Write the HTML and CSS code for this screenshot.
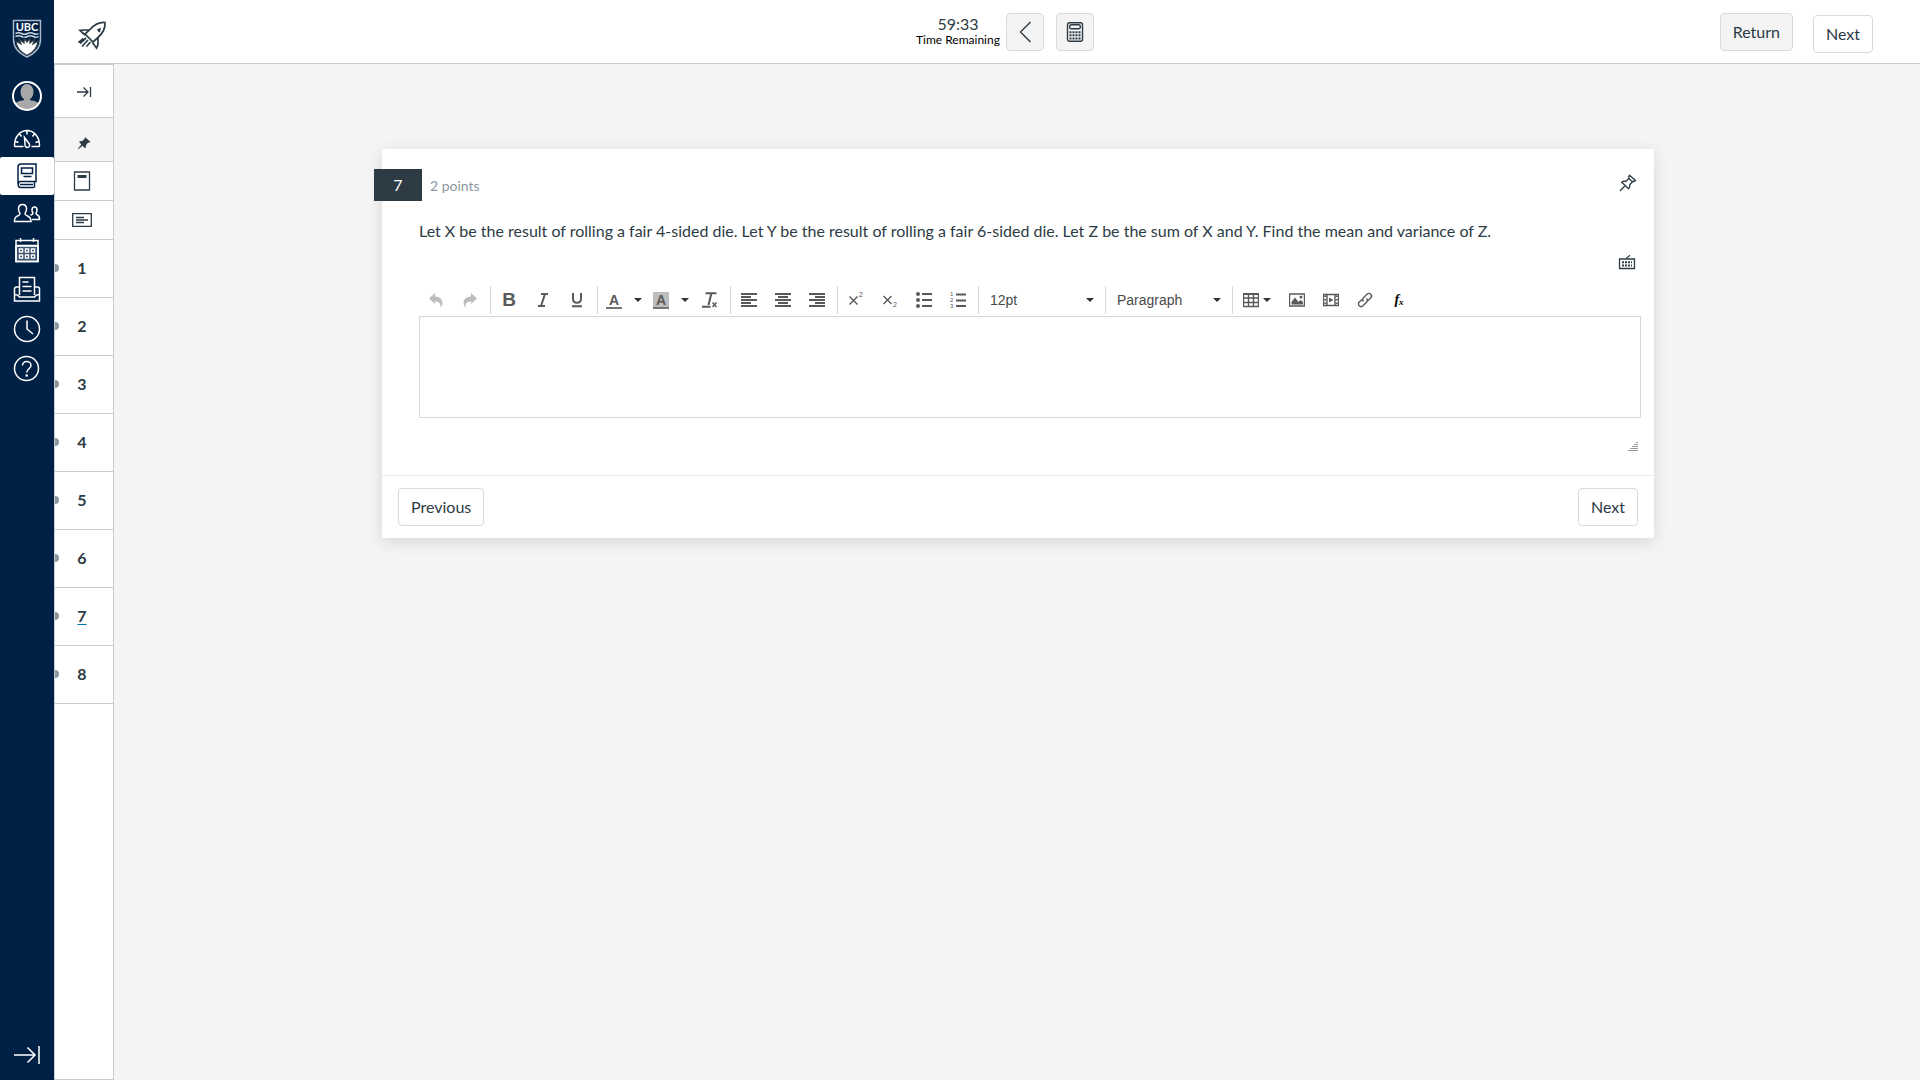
FILE: index.html
```
<!DOCTYPE html>
<html lang="en">
<head>
<meta charset="UTF-8">
<meta name="viewport" content="width=device-width, initial-scale=1.0">
<title>Quiz - Question 7</title>
<link rel="stylesheet" href="styles.css">
</head>
<body>
<nav class="global-nav" aria-label="Global navigation">
    <a class="logo" href="#" aria-label="UBC home">
        <svg width="30" height="40" viewBox="0 0 30 40">
            <path d="M1.500 1.500h27v19c0 8-6 14-13.500 17.500C7.500 34.500 1.500 28.500 1.500 20.500z" fill="#002145" stroke="#a9b7c9" stroke-width="1.500"/>
            <path d="M3.500 14.500q3-1.500 6 0t6 0 6 0 5 0M3.500 17.500q3-1.500 6 0t6 0 6 0 5 0" fill="none" stroke="#c9d3df" stroke-width="1.500"/>
            <path d="M4 22l5 3-2-5 5 4 0-5 3 4 3-4 0 5 5-4-2 5 5-3c-.5 7-5 11.500-11 14.500C9 33.500 4.500 29 4 22z" fill="#fff"/>
            <text x="15" y="11.500" text-anchor="middle" class="logo-text">UBC</text>
        </svg>
    </a>
    <a href="#" aria-label="Account">
        <svg width="30" height="30" viewBox="0 0 30 30">
            <clipPath id="face"><circle cx="15" cy="15" r="14"/></clipPath>
            <circle cx="15" cy="15" r="14" fill="#002145"/>
            <g clip-path="url(#face)" fill="#a8a8a8" stroke="none"><ellipse cx="15" cy="11" rx="6.500" ry="8"/><path d="M12 16h6v3c5 1 9 2 10 6v5H2v-5c1-4 5-5 10-6z"/></g>
            <circle cx="15" cy="15" r="14" fill="none" stroke="#fff" stroke-width="2"/>
        </svg>
    </a>
    <a href="#" aria-label="Dashboard">
        <svg class="line" width="28" height="28" viewBox="0 0 28 28">
            <path d="M10.500 23.500H2c-.5 0-.5-.5-.5-1C1.500 14 7 7.500 14 7.500S26.500 14 26.500 22.500c0 .5 0 1-.5 1h-7.500M14 8v3.500M6.500 11l2 2.500M21.500 11l-2 2.500M2.500 18.500l3 1M25.500 18.500l-3 1M11.500 14.500l4.500 6c1.500 2 0 4-1.500 4s-3-1.500-2.500-3.500z"/>
        </svg>
    </a>
    <a class="active" href="#" aria-label="Courses">
        <svg class="line" width="28" height="26" viewBox="0 0 28 26">
            <path d="M5 21V4c0-2 1-3 3-3h15v17.500H7.500c-3 0-3 6 0 6H21M8.500 5h11v5.500h-11zM10.500 13.500h8M21.500 19v5.500M7 21.500h13"/>
        </svg>
    </a>
    <a href="#" aria-label="Groups">
        <svg class="line" width="28" height="24" viewBox="0 0 28 24">
            <path d="M1.500 20.500c0-3.500.5-4.500 3-5.500 2-.8 2.500-1 2.500-2.500C6 11 5.500 9.500 5.500 8c0-3 1.500-4.500 4-4.500S13.500 5 13.500 8c0 1.500-.5 3-1.500 4.500 0 1.500.5 1.700 2.500 2.500 2.500 1 3.500 2 3.500 5.500zM19 18.500h7.500c0-2.500-.5-4-2-4.500-1.500-.6-1.500-.8-1.500-2 .7-.8 1-2 1-3 0-2-1-3-2.500-3S19 7 19 9c0 1 .3 2.200 1 3 0 1.200-.5 1.500-2.500 2.200"/>
        </svg>
    </a>
    <a href="#" aria-label="Calendar">
        <svg class="line" width="28" height="26" viewBox="0 0 28 26">
            <path fill="#3b546f" d="M3 9h22v15.500H3z"/>
            <path d="M3 3.500h22v21H3zM3 8.500h22M7.500 1v4M20.500 1v4"/>
            <path fill="#002145" d="M6.500 12h3v3h-3zM12.500 12h3v3h-3zM18.500 12h3v3h-3zM6.500 18h3v3h-3zM12.500 18h3v3h-3zM18.500 18h3v3h-3z"/>
        </svg>
    </a>
    <a href="#" aria-label="Inbox">
        <svg class="line" width="28" height="28" viewBox="0 0 28 28">
            <path d="M6.500 20V2.500h15V20M9.500 7h6M9.500 11.500h9M9.500 16h9M6.500 12h-3c-1.500 0-2 1-2 2v12h25V14c0-1-.5-2-2-2h-3M2 19.500c2 0 3 0 4.500 2.500h15c1.500-2.500 2.500-2.500 4.500-2.500"/>
        </svg>
    </a>
    <a href="#" aria-label="History">
        <svg class="line" width="28" height="28" viewBox="0 0 28 28">
            <circle cx="14" cy="14" r="12.500"/><path d="M14 5.500V14l6 5"/>
        </svg>
    </a>
    <a href="#" aria-label="Help">
        <svg class="line" width="28" height="28" viewBox="0 0 28 28">
            <circle cx="13.500" cy="13.500" r="12"/><path d="M9.500 10.500c0-2.500 2-4 4.200-4s4.300 1.500 4.300 4c0 3-4.300 3.500-4.300 7"/><circle cx="13.700" cy="20.500" r=".6"/>
        </svg>
    </a>
    <a class="expand" href="#" aria-label="Expand navigation">
        <svg class="line" width="28" height="20" viewBox="0 0 28 20">
            <path d="M1 10h21M14.500 2.500L22 10l-7.500 7.500M26 1v18"/>
        </svg>
    </a>
</nav>

<div class="app">
    <header class="top-bar">
        <svg class="rocket" width="30" height="30" viewBox="0 0 30 30">
            <path d="M13 9.500C17 5 22 2 28 2.500c.5 6-2.500 11-7 15l-5 4.500-8-8zM12.500 10H7.500L3 10.500l5 4.500M21 17.500v7L19.500 28l-4-5.500"/>
            <path d="M9 18l-6 5.500M11 20l-6 6.500M13.500 22l-4 4.500M6.500 18.500l-5 4"/>
            <path class="solid" d="M20 9.500l4-2-1 5-2-1z"/>
        </svg>
        <div class="tools">
            <div class="timer">
                <span class="time">59:33</span>
                <span class="time-label">Time Remaining</span>
            </div>
            <button class="btn gray icon-btn" aria-label="Hide time">
                <svg width="20" height="24" viewBox="0 0 20 24"><path d="M15.500 2l-10 10 10 10"/></svg>
            </button>
            <button class="btn gray icon-btn" aria-label="Calculator">
                <svg width="18" height="20" viewBox="0 0 18 20">
                    <rect x="1.500" y=".7" width="15" height="18.600" rx="2"/>
                    <rect x="3.700" y="2.700" width="10.600" height="4" rx="1.500"/>
                    <path class="keys" d="M3.500 10.200h11M3.500 13.200h11M3.500 16.500h11"/>
                </svg>
            </button>
        </div>
        <div class="actions">
            <button class="btn gray">Return</button>
            <button class="btn lower">Next</button>
        </div>
    </header>

    <div class="body">
        <aside class="question-nav">
            <button class="collapse" aria-label="Collapse question list">
                <svg width="16" height="12" viewBox="0 0 16 12"><path d="M1 6h11M7.500 1.500L12 6l-4.500 4.500M14.500 1v10"/></svg>
            </button>
            <button class="pinned" aria-label="Pinned questions">
                <svg width="14" height="14" viewBox="0 0 14 14"><path class="solid" d="M8 1l5.500 5-1.500.8-.8-.2-2.300 2.700c.3 1.200 0 2.200-.7 3L5.500 9.800 1.500 13H1v-.5l3.300-4L2 5.800c1-.7 2-1 3-.6l2.700-2.500z"/></svg>
            </button>
            <button class="tool" aria-label="Stimulus">
                <svg width="18" height="20" viewBox="0 0 18 20"><path d="M1.500 1h15v18h-15z"/><path class="solid" d="M4.500 4h9v3h-9z"/></svg>
            </button>
            <button class="tool" aria-label="Text block">
                <svg width="20" height="14" viewBox="0 0 20 14"><path d="M.7.700h18.600v12.600H.7zM4 4.500h8M4 7h12M4 9.500h8"/></svg>
            </button>
            <a href="#">1</a>
            <a href="#">2</a>
            <a href="#">3</a>
            <a href="#">4</a>
            <a href="#">5</a>
            <a href="#">6</a>
            <a class="current" href="#">7</a>
            <a href="#">8</a>
        </aside>

        <main>
            <section class="card">
                <div class="card-head">
                    <span class="number">7</span>
                    <span class="points">2 points</span>
                    <button class="plain pin" aria-label="Pin question">
                        <svg width="18" height="18" viewBox="0 0 18 18"><path d="M10.500 1.200l6 5.300-1.500 1-1-.2-3.300 3.500c.4 1.700 0 3-1 4L2.700 8.300c1.200-1 2.500-1.300 4-.8L10 4.300l-.3-1.500zM6 11.700L1 17M9.800 4.500l4.200 3.800"/></svg>
                    </button>
                </div>
                <div class="question">
                    <p>Let X be the result of rolling a fair 4-sided die. Let Y be the result of rolling a fair 6-sided die. Let Z be the sum of X and Y. Find the mean and variance of Z.</p>
                    <button class="plain keyboard" aria-label="Keyboard shortcuts">
                        <svg width="18" height="16" viewBox="0 0 18 16"><path d="M1.500 5h15v9.500h-15zM8.500 4.500c0-1.500 3-1 3-3.500"/><path class="keys" d="M4 8.200h10M4 11.500h10"/></svg>
                    </button>
                    <div class="toolbar">
                        <div class="group">
                            <button class="off" aria-label="Undo"><svg width="16" height="16" viewBox="0 0 16 16"><path class="solid" d="M1 6.500L7 1v3.500c5 0 7.500 3 7.500 6.500 0 2-.7 3.300-2 4.500.5-4-1.500-6-5.500-6V12z"/></svg></button>
                            <button class="off" aria-label="Redo"><svg width="16" height="16" viewBox="0 0 16 16"><path class="solid" d="M15 6.500L9 1v3.500c-5 0-7.500 3-7.500 6.500 0 2 .7 3.300 2 4.500-.5-4 1.500-6 5.500-6V12z"/></svg></button>
                        </div>
                        <div class="group">
                            <button class="bold" aria-label="Bold">B</button>
                            <button aria-label="Italic"><svg width="16" height="16" viewBox="0 0 16 16"><path d="M6 2h7M3 14h7M10 2L6 14"/></svg></button>
                            <button aria-label="Underline"><svg width="16" height="16" viewBox="0 0 16 16"><path d="M4 1v6c0 5 8 5 8 0V1M3 14.200h10"/></svg></button>
                        </div>
                        <div class="group">
                            <button class="color" aria-label="Text color"><span class="swatch">A</span></button>
                            <button class="arrow" aria-label="Text color options"><span class="caret"></span></button>
                            <button class="color" aria-label="Background color"><span class="swatch filled">A</span></button>
                            <button class="arrow" aria-label="Background color options"><span class="caret"></span></button>
                            <button aria-label="Clear formatting"><svg width="16" height="16" viewBox="0 0 16 16"><path d="M3.500 1.200h11M9.500 1L6.500 13M0 14.800h8.500"/><path class="thin" d="M10.500 10.500l4 4.500M14.500 10.500l-4 4.500"/></svg></button>
                        </div>
                        <div class="group">
                            <button aria-label="Align left"><svg width="16" height="16" viewBox="0 0 16 16"><path d="M0 2h16M0 5h10M0 8h16M0 11h10M0 14h16"/></svg></button>
                            <button aria-label="Align center"><svg width="16" height="16" viewBox="0 0 16 16"><path d="M0 2h16M3 5h10M0 8h16M3 11h10M0 14h16"/></svg></button>
                            <button aria-label="Align right"><svg width="16" height="16" viewBox="0 0 16 16"><path d="M0 2h16M6 5h10M0 8h16M6 11h10M0 14h16"/></svg></button>
                        </div>
                        <div class="group">
                            <button aria-label="Superscript"><svg width="16" height="16" viewBox="0 0 16 16"><path class="thin" d="M1.500 4.500l8 8M9.500 4.500l-8 8"/><text x="11" y="5">2</text></svg></button>
                            <button aria-label="Subscript"><svg width="16" height="16" viewBox="0 0 16 16"><path class="thin" d="M1.500 4l8 8M9.500 4l-8 8"/><text x="11" y="15">2</text></svg></button>
                            <button aria-label="Bulleted list"><svg width="16" height="16" viewBox="0 0 16 16"><path d="M6 2h10M6 8h10M6 14h10"/><g class="solid"><circle cx="2" cy="2" r="2"/><circle cx="2" cy="8" r="2"/><circle cx="2" cy="14" r="2"/></g></svg></button>
                            <button class="numbers" aria-label="Numbered list"><svg width="16" height="20" viewBox="0 0 16 20"><path d="M6 4.500h10M6 10.500h10M6 16h10"/><text x="0" y="6">1</text><text x="0" y="12">2</text><text x="0" y="18">3</text></svg></button>
                        </div>
                        <div class="group">
                            <label class="picker"><select aria-label="Font size"><option>12pt</option></select><span class="caret"></span></label>
                        </div>
                        <div class="group">
                            <label class="picker"><select aria-label="Block format"><option>Paragraph</option></select><span class="caret"></span></label>
                        </div>
                        <div class="group">
                            <button class="table-btn" aria-label="Table"><svg width="16" height="16" viewBox="0 0 16 16"><path class="thin" d="M.5 2h15v12.500H.5zM.5 6h15M.5 10.500h15M5.500 2v12.500M10.500 2v12.500"/><path d="M0 2h16"/></svg><span class="caret"></span></button>
                            <button aria-label="Insert image"><svg width="16" height="16" viewBox="0 0 16 16"><path class="thin" d="M.5 2h15v12H.5z"/><path class="solid" d="M2.500 12.500V10L6 5.500l3.500 4.500 2-2 2.500 2v2.500z"/><circle class="solid" cx="12" cy="5" r="1.500"/></svg></button>
                            <button aria-label="Insert media"><svg width="16" height="16" viewBox="0 0 16 16"><path class="thin" d="M.5 2.500h15v11H.5zM4 2.500v11M12 2.500v11"/><path class="solid" d="M6 5.500l4.500 2.500L6 10.500z"/><path class="holes" d="M2.300 3.500v10M13.700 3.500v10"/></svg></button>
                            <button aria-label="Insert link"><svg width="16" height="16" viewBox="0 0 16 16"><path class="thin" d="M6.500 9.500c-1.200-1.200-1.200-2.500 0-3.700l3.500-3.500c1.200-1.200 2.600-1.200 3.700-.1s1.200 2.500 0 3.700L11 8.500M9.500 6.500c1.200 1.200 1.200 2.500 0 3.700L6 13.700c-1.200 1.200-2.600 1.200-3.700.1s-1.200-2.500 0-3.700L5 7.500"/></svg></button>
                            <button class="fx" aria-label="Insert equation">f<small>x</small></button>
                        </div>
                    </div>
                    <textarea class="answer" aria-label="Answer"></textarea>
                    <div class="grip"><svg width="10" height="10" viewBox="0 0 10 10"><path d="M8 .5h2M6 2.500h4M4 4.500h6M2 6.500h8M0 8.500h10"/></svg></div>
                </div>
                <footer class="card-foot">
                    <button class="btn">Previous</button>
                    <button class="btn">Next</button>
                </footer>
            </section>
        </main>
    </div>
</div>
</body>
</html>
```

FILE: styles.css
```
* {
    box-sizing: border-box;
}
body {
    margin: 0;
    min-height: 100vh;
    display: flex;
    background: #f4f4f4;
    color: #2d3b45;
    font-family: Lato, sans-serif;
    font-size: 16px;
}
button {
    font: inherit;
    color: inherit;
    cursor: pointer;
}
svg {
    display: block;
    fill: none;
    stroke: #2d3b45;
    stroke-width: 1.3;
}
svg .solid {
    fill: #2d3b45;
    stroke: none;
}

/* global navigation */
.global-nav {
    width: 54px;
    flex: none;
    display: flex;
    flex-direction: column;
    background: #002145;
}
.global-nav a {
    display: flex;
    justify-content: center;
    padding: 6px 0;
}
.global-nav .logo {
    padding: 19px 0 16px;
}
.global-nav .line {
    stroke: #fff;
    stroke-width: 1.5;
}
.global-nav .active {
    background: #fff;
    border-radius: 2px;
}
.global-nav .active .line {
    stroke: #002145;
}
.global-nav .expand {
    margin-top: auto;
    padding: 15px 0;
}
.logo-text {
    fill: #fff;
    stroke: none;
    font-size: 11px;
    font-weight: bold;
}

/* top bar */
.app {
    flex: 1;
    display: flex;
    flex-direction: column;
}
.top-bar {
    height: 64px;
    display: grid;
    grid-template-columns: 14fr auto 13fr;
    padding: 13px 47px 0 23px;
    background: #fff;
    border-bottom: 1px solid #c7cdd1;
}
.rocket {
    margin-top: 7px;
    stroke-width: 1.7;
}
.tools {
    display: flex;
    align-items: flex-start;
    gap: 12px;
}
.timer {
    display: flex;
    flex-direction: column;
    align-items: center;
    margin-right: -6px;
}
.time {
    line-height: 21px;
}
.time-label {
    font-size: 12px;
    line-height: 12px;
    color: #000;
}
.btn {
    height: 38px;
    padding: 0 12px 2px;
    background: #fff;
    border: 1px solid #d7dade;
    border-radius: 4px;
}
.gray {
    background: #f4f4f4;
}
.icon-btn {
    width: 38px;
    padding: 0;
    display: flex;
    align-items: center;
    justify-content: center;
}
.icon-btn svg {
    stroke-width: 1.4;
}
.icon-btn .keys {
    stroke-width: 2;
    stroke-dasharray: 2 1;
}
.actions {
    display: flex;
    align-items: flex-start;
    justify-content: flex-end;
    gap: 20px;
}
.lower {
    margin-top: 2px;
}

/* question list */
.body {
    flex: 1;
    display: flex;
}
.question-nav {
    width: 60px;
    flex: none;
    display: flex;
    flex-direction: column;
    background: #fff;
    border: 1px solid #c7cdd1;
}
.question-nav button,
.question-nav a {
    display: flex;
    align-items: center;
    justify-content: center;
    padding: 0 4px 2px 0;
    background: #fff;
    border: 0;
    border-bottom: 1px solid #c7cdd1;
}
.question-nav .collapse {
    height: 53px;
    padding: 2px 0 0;
}
.question-nav .pinned {
    height: 44px;
    padding: 6px 0 0;
    background: #f4f4f4;
}
.question-nav .tool {
    height: 39px;
    padding-bottom: 0;
}
.question-nav a {
    height: 58px;
    position: relative;
    color: #2d3b45;
    font-weight: bold;
    text-decoration: none;
}
.question-nav a::before {
    content: "";
    position: absolute;
    left: 0;
    width: 4px;
    height: 8px;
    border-radius: 0 4px 4px 0;
    background: #8b969e;
}
.question-nav .current {
    text-decoration: underline #0374b5;
    text-underline-offset: 2px;
}

/* question card */
main {
    flex: 1;
    padding: 85px 24px 24px 26px;
}
.card {
    max-width: 1272px;
    margin: 0 auto;
    background: #fff;
    border-radius: 2px;
    box-shadow: 0 4px 16px rgba(0, 0, 0, 0.12);
}
.card-head {
    display: flex;
    align-items: center;
    padding-top: 20px;
}
.number {
    width: 48px;
    margin-left: -8px;
    line-height: 32px;
    text-align: center;
    color: #fff;
    background: #2d3b45;
}
.points {
    margin-left: 8px;
    font-size: 14px;
    color: #8b969e;
}
.plain {
    padding: 0;
    background: none;
    border: 0;
}
.pin {
    margin: 0 17px 4px auto;
}
.question {
    padding: 18px 13px 23px 37px;
}
.question p {
    margin: 0;
    line-height: 24px;
}
.keyboard {
    display: block;
    margin: 11px 5px 16px auto;
}
.keyboard .keys {
    stroke-width: 2;
    stroke-dasharray: 2 1;
}

/* editor */
.toolbar {
    display: flex;
    flex-wrap: wrap;
    margin-bottom: 2px;
    color: #595959;
    font-family: "Liberation Sans", sans-serif;
}
.group {
    display: flex;
    height: 28px;
    padding: 0 3px 0 1px;
    border-left: 1px solid #d9d9d9;
}
.group:first-child {
    padding-left: 0;
    border-left: 0;
}
.toolbar button {
    width: 34px;
    padding: 0;
    display: flex;
    align-items: center;
    justify-content: center;
    background: none;
    border: 0;
}
.toolbar svg {
    stroke: #595959;
    stroke-width: 2;
}
.toolbar .solid {
    fill: #595959;
    stroke: none;
}
.toolbar .thin {
    stroke-width: 1.4;
}
.toolbar .holes {
    stroke-dasharray: 1.5 2;
}
.toolbar text {
    fill: #595959;
    stroke: none;
    font-size: 7px;
}
.toolbar .numbers text {
    font-size: 6px;
    line-height: 6px;
}
.toolbar .off .solid {
    fill: #bdbdbd;
}
.toolbar .bold {
    font-size: 19px;
    font-weight: bold;
}
.toolbar .color {
    width: 30px;
}
.toolbar .arrow {
    width: 17px;
}
.swatch {
    width: 16px;
    height: 17px;
    border-bottom: 2px solid #757575;
    font-size: 14px;
    font-weight: bold;
    line-height: 16px;
}
.filled {
    background: #bdbdbd;
}
.caret {
    border: 4px solid transparent;
    border-top-color: #333;
    border-bottom: 0;
}
.picker {
    width: 122px;
    display: flex;
    align-items: center;
    padding: 0 8px 0 10px;
}
.picker select {
    flex: 1;
    padding: 0;
    appearance: none;
    background: none;
    border: 0;
    color: #4a4a4a;
    font: 14px "Liberation Sans", sans-serif;
}
.toolbar .table-btn {
    width: 46px;
    gap: 4px;
}
.toolbar .fx {
    color: #000;
    font: italic bold 14px "Liberation Serif", serif;
}
.fx small {
    padding-top: 4px;
    font-size: 9px;
}
.answer {
    display: block;
    width: 100%;
    height: 102px;
    padding: 8px;
    border: 1px solid #d7d7d7;
    resize: none;
    font: inherit;
}
.grip {
    display: flex;
    justify-content: flex-end;
    padding: 24px 3px 0 0;
}
.grip svg {
    stroke: #999;
    stroke-width: 1;
}
.card-foot {
    display: flex;
    justify-content: space-between;
    padding: 12px 16px;
    border-top: 1px solid #eee;
}
```
